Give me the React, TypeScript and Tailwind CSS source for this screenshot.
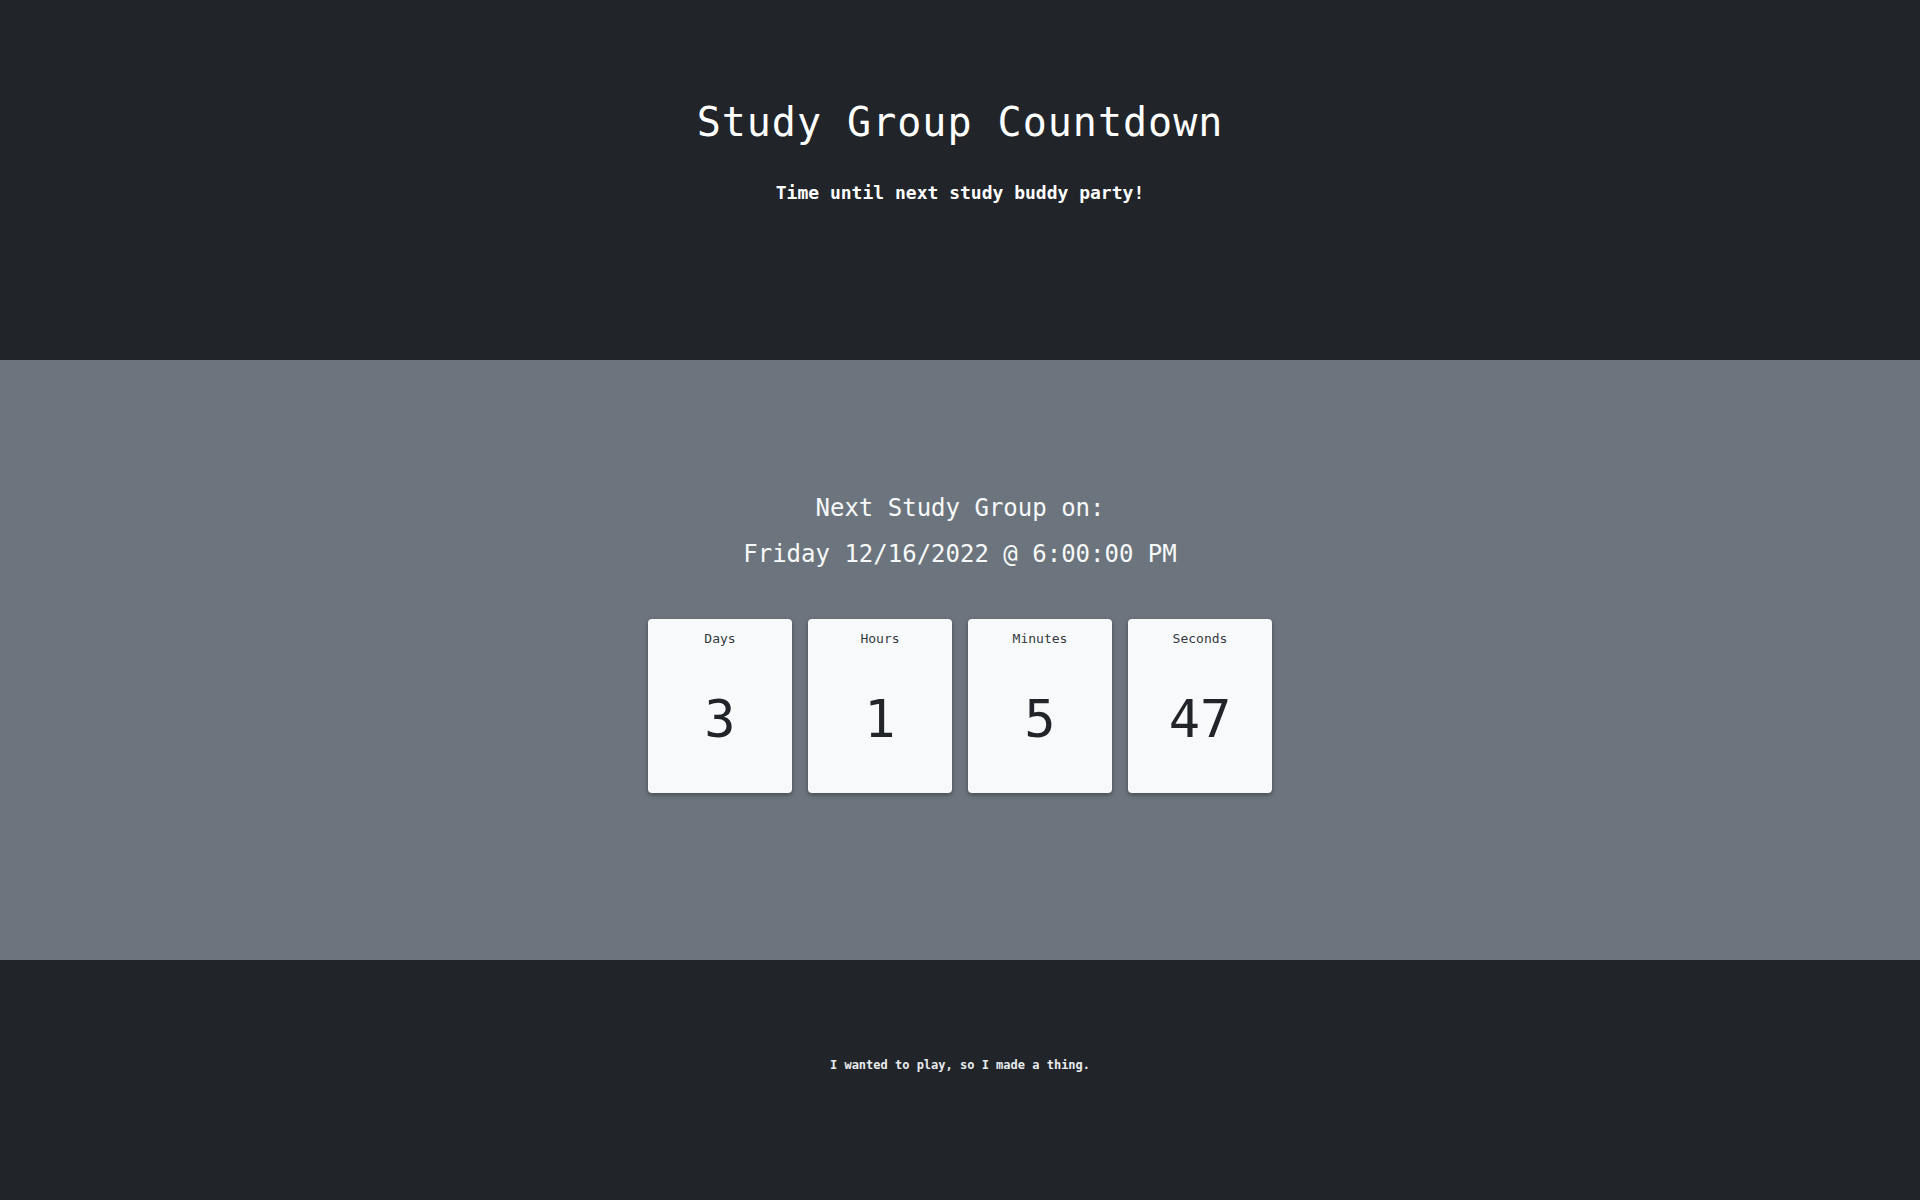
const countdown = [
  { label: "Days", value: 3 },
  { label: "Hours", value: 1 },
  { label: "Minutes", value: 5 },
  { label: "Seconds", value: 47 },
];

const mono = "font-['DejaVu_Sans_Mono','Liberation_Mono',monospace]";

const TimeCard = ({ label, value }: { label: string; value: number }) => {
  return (
    <div className="flex h-[174px] w-[144px] flex-col items-center rounded-[4px] bg-[#f8f9fa] pt-[11px] shadow-[0_2px_5px_rgba(0,0,0,0.35)]">
      <span className="text-[13px] leading-[18px] text-[#343a40]">{label}</span>
      <span className="mt-[41px] text-[52px] leading-[60px] text-[#212529]">
        {value}
      </span>
    </div>
  );
};

export default function App() {
  return (
    <div className={`flex min-h-screen flex-col ${mono}`}>
      {/* Header */}
      <header className="flex h-[360px] flex-col items-center bg-[#212529] pt-[98px] text-white">
        <h1 className="text-[40px] font-normal leading-[48px] tracking-[1px]">
          Study Group Countdown
        </h1>
        <p className="mt-[33px] text-[18px] font-semibold leading-[28px]">
          Time until next study buddy party!
        </p>
      </header>

      {/* Countdown */}
      <main className="flex h-[600px] flex-col items-center bg-[#6c757d] pt-[130px] text-[#f8f9fa]">
        <h2 className="text-[24px] font-medium leading-[36px]">
          Next Study Group on:
        </h2>
        <h2 className="mt-[10px] text-[24px] font-medium leading-[36px]">
          Friday 12/16/2022 @ 6:00:00 PM
        </h2>
        <div className="mt-[47px] flex gap-[16px]">
          {countdown.map((item) => (
            <TimeCard key={item.label} label={item.label} value={item.value} />
          ))}
        </div>
      </main>

      {/* Footer */}
      <footer className="flex h-[240px] flex-col items-center bg-[#212529] pt-[96px] text-[#e9ecef]">
        <p className="text-[12px] font-semibold leading-[18px]">
          I wanted to play, so I made a thing.
        </p>
      </footer>
    </div>
  );
}
